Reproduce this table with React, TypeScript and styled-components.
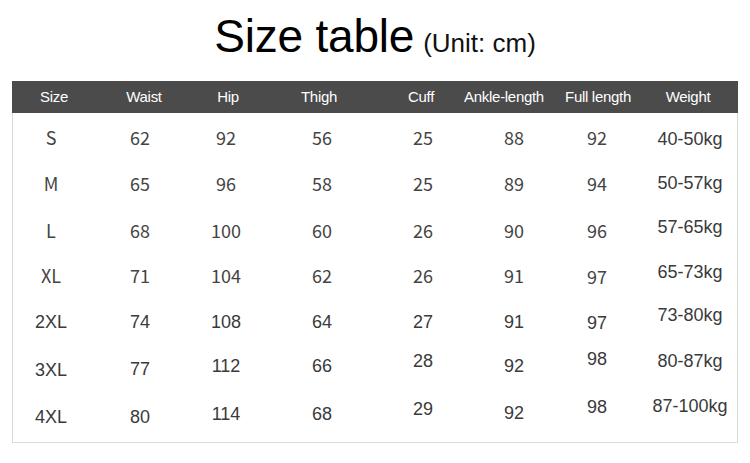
import React from "react";
import styled, { createGlobalStyle } from "styled-components";

const GlobalStyle = createGlobalStyle`
  html, body {
    margin: 0;
    padding: 0;
    background: #ffffff;
  }
  body {
    font-family: "Liberation Sans", Arial, sans-serif;
  }
`;

const Page = styled.div`
  width: 750px;
  height: 463px;
  display: flex;
  flex-direction: column;
  background: #ffffff;
  overflow: hidden;
`;

const TitleRow = styled.div`
  box-sizing: border-box;
  height: 81px;
  padding-top: 13px;
  display: flex;
  justify-content: center;
  align-items: baseline;
  gap: 9px;
  color: #000;
`;

const Title = styled.h1`
  margin: 0;
  font-family: "Liberation Sans", Arial, sans-serif;
  font-weight: 400;
  font-size: 46px;
  line-height: 46px;
  letter-spacing: -0.2px;
`;

const Unit = styled.span`
  font-family: "Liberation Sans", Arial, sans-serif;
  font-size: 26px;
  line-height: 26px;
  color: #111;
`;

const Table = styled.div`
  margin: 0 12px;
  width: 726px;
  display: flex;
  flex-direction: column;
`;

const HeaderRow = styled.div`
  height: 32px;
  background: #4b4b4b;
  display: grid;
  grid-template-columns: 84px 96px 72px 110px 94px 72px 116px 64px;
  align-items: center;
`;

const HeaderCell = styled.div`
  display: flex;
  justify-content: center;
  white-space: nowrap;
  color: #ffffff;
  font-family: "Liberation Sans", Arial, sans-serif;
  font-size: 15px;
  line-height: 32px;
  letter-spacing: -0.3px;
`;

const Body = styled.div`
  box-sizing: border-box;
  height: 330px;
  padding-top: 2px;
  border: 1px solid #dadada;
  border-top: none;
  overflow: hidden;
  display: flex;
  flex-direction: column;
`;

const Row = styled.div`
  height: 46.3px;
  flex: 0 0 46.3px;
  display: grid;
  grid-template-columns: 76px 102px 70px 122px 80px 102px 64px 122px;
  align-items: center;
`;

const Cell = styled.div<{ $dy: number; $cjk: boolean }>`
  display: flex;
  justify-content: center;
  white-space: nowrap;
  font-family: ${(p) =>
    p.$cjk
      ? `"Noto Sans CJK SC", "Noto Sans", sans-serif`
      : `"Liberation Sans", Arial, sans-serif`};
  font-size: 18px;
  line-height: 24px;
  color: ${(p) => (p.$cjk ? "#444444" : "#3a3a3a")};
  transform: translateY(${(p) => p.$dy - (p.$cjk ? 1 : 0)}px);
`;

const headers = [
  "Size",
  "Waist",
  "Hip",
  "Thigh",
  "Cuff",
  "Ankle-length",
  "Full length",
  "Weight",
];

type RowData = { cells: string[]; dy: number[]; cjk: boolean };

const rows: RowData[] = [
  { cells: ["S", "62", "92", "56", "25", "88", "92", "40-50kg"], dy: [0, 0, 0, 0, 0, 0, 0, 1], cjk: true },
  { cells: ["M", "65", "96", "58", "25", "89", "94", "50-57kg"], dy: [0, 0, 0, 0, 0, 0, 0, -1], cjk: true },
  { cells: ["L", "68", "100", "60", "26", "90", "96", "57-65kg"], dy: [0, 0, 0, 0, 0, 0, 0, -4], cjk: true },
  { cells: ["XL", "71", "104", "62", "26", "91", "97", "65-73kg"], dy: [-1, -1, -1, -1, -1, -1, 0, -5], cjk: true },
  { cells: ["2XL", "74", "108", "64", "27", "91", "97", "73-80kg"], dy: [-1, -1, -1, -1, -1, -1, 0, -8], cjk: false },
  { cells: ["3XL", "77", "112", "66", "28", "92", "98", "80-87kg"], dy: [0, -1, -4, -4, -9, -4, -11, -9], cjk: false },
  { cells: ["4XL", "80", "114", "68", "29", "92", "98", "87-100kg"], dy: [1, 1, -2, -2, -7, -3, -9, -10], cjk: false },
];

export default function App() {
  return (
    <>
      <GlobalStyle />
      <Page>
        <TitleRow>
          <Title>Size table</Title>
          <Unit>(Unit: cm)</Unit>
        </TitleRow>
        <Table>
          <HeaderRow>
            {headers.map((h) => (
              <HeaderCell key={h}>{h}</HeaderCell>
            ))}
          </HeaderRow>
          <Body>
            {rows.map((r) => (
              <Row key={r.cells[0]}>
                {r.cells.map((c, i) => (
                  <Cell key={i} $dy={r.dy[i]} $cjk={r.cjk && i < 7}>
                    {c}
                  </Cell>
                ))}
              </Row>
            ))}
          </Body>
        </Table>
      </Page>
    </>
  );
}
